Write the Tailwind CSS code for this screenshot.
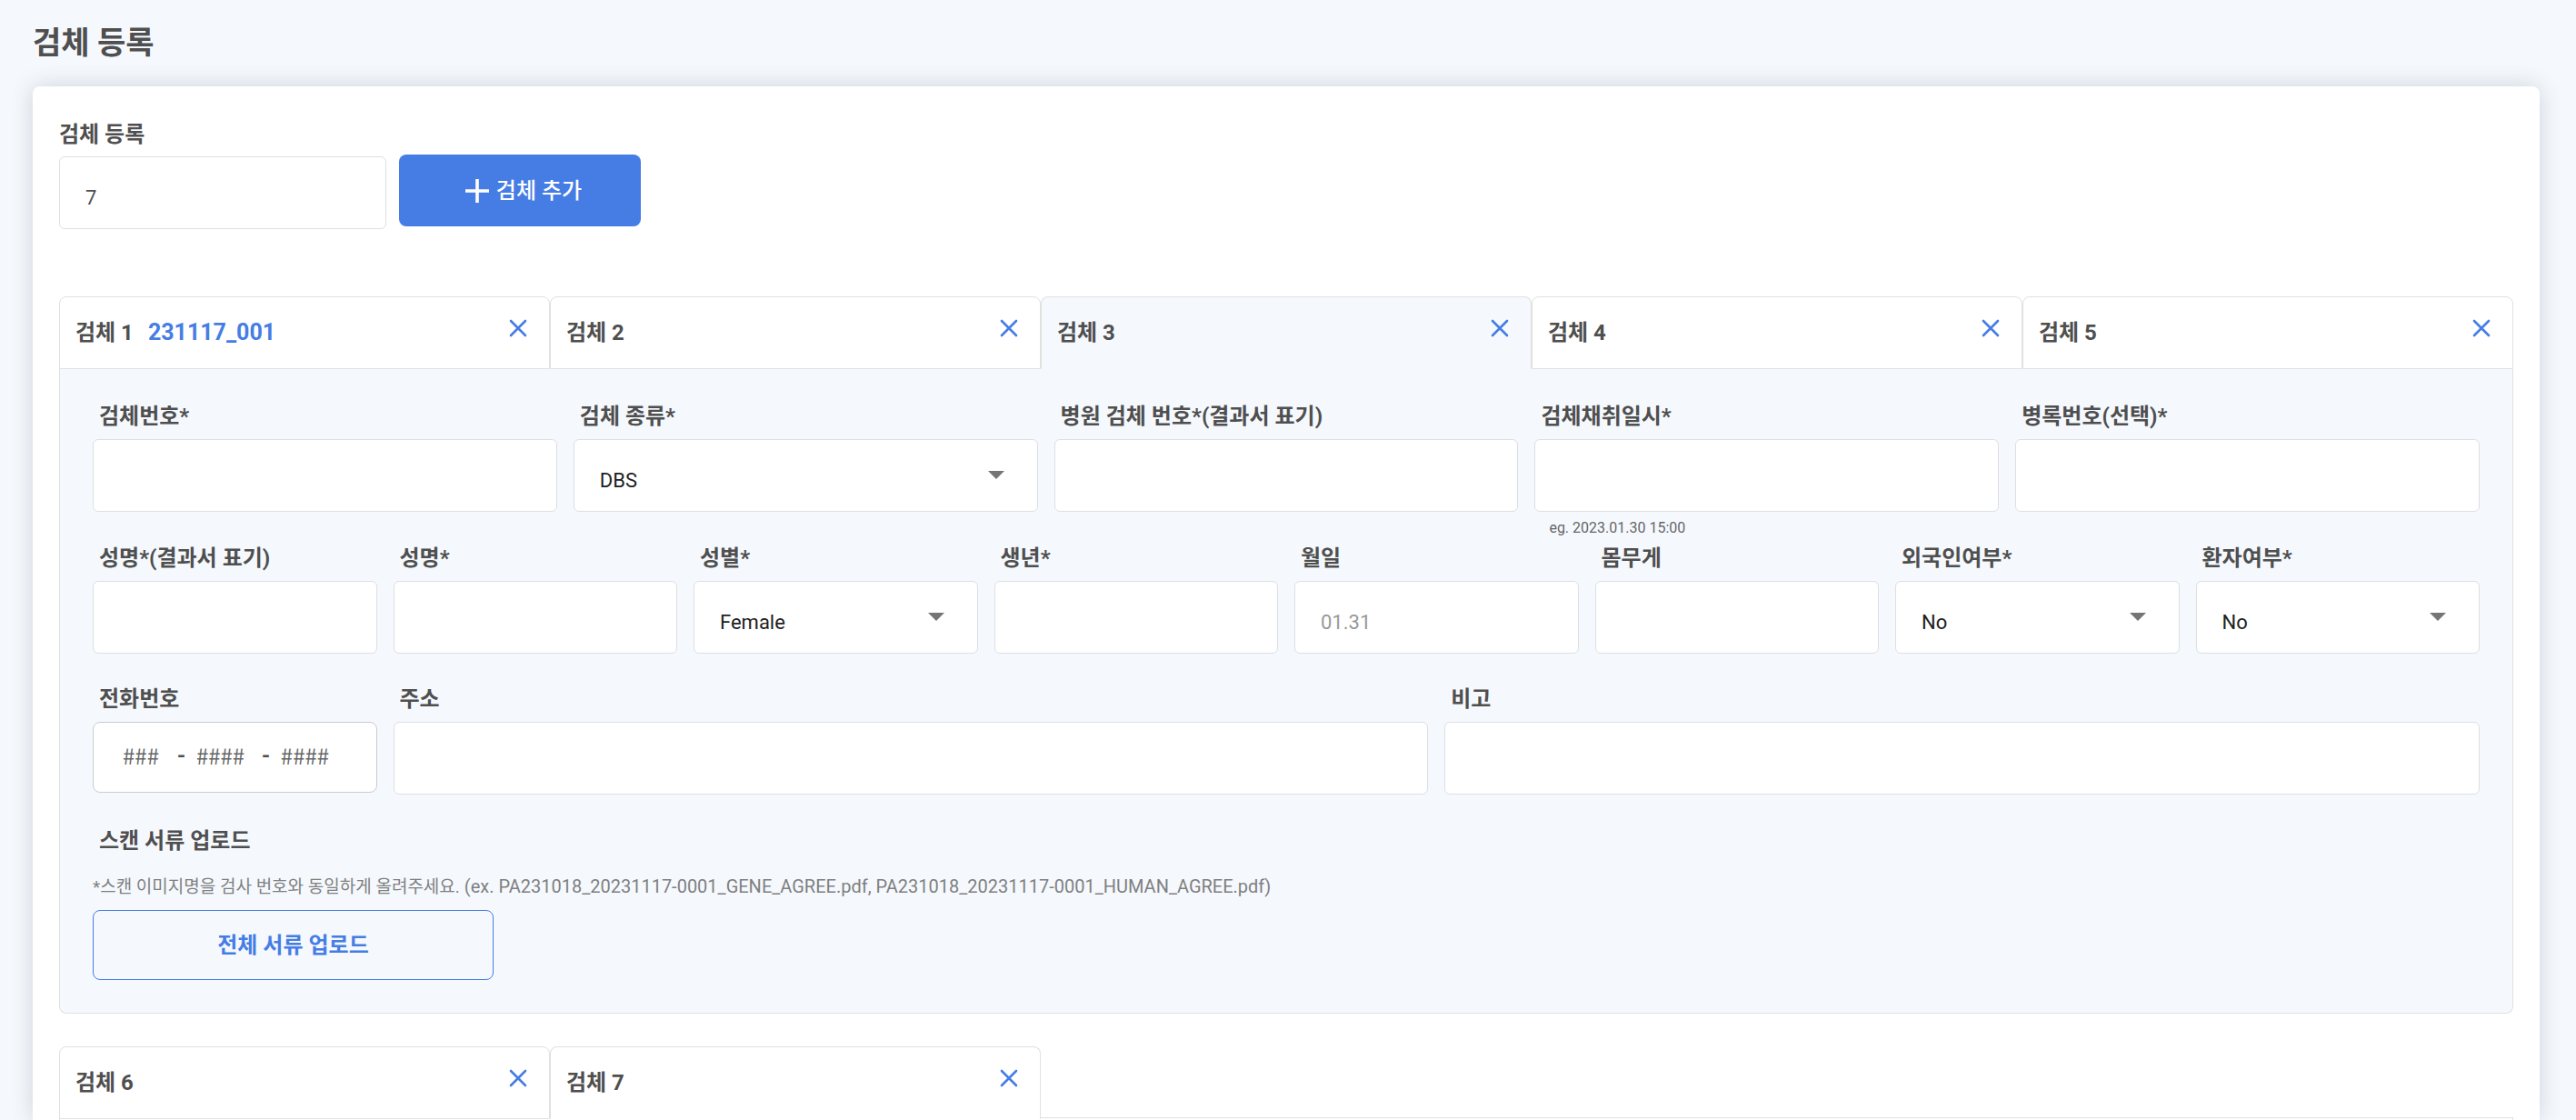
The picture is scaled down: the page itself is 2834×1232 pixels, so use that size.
<!DOCTYPE html>
<html lang="ko">
<head>
<meta charset="utf-8">
<meta name="viewport" content="width=device-width, initial-scale=1">
<title>검체 등록</title>
<script src="https://cdn.jsdelivr.net/npm/@tailwindcss/browser@4"></script>
</head>
<body class="bg-[#f5f9fe] font-['Roboto','Noto_Sans_CJK_KR',sans-serif] text-2xl text-[#4f4f4f]">
<svg class="hidden" aria-hidden="true">
  <symbol id="close" viewBox="0 0 20 20"><path d="M2 2 18 18M18 2 2 18" fill="none" stroke="currentColor" stroke-width="2.6" stroke-linecap="round"/></symbol>
  <symbol id="caret" viewBox="0 0 18 9"><path d="M0 0H18L9 9Z" fill="currentColor"/></symbol>
</svg>
<div class="flex min-h-screen flex-col pt-5 pr-10 pl-9">
  <h1 class="h-[75px] text-[34px] leading-[54px] font-bold">검체 등록</h1>
  <main class="flex flex-1 flex-col rounded-t-lg bg-white pt-9 pr-[29px] pl-[29px] shadow-[0_0_24px_rgba(50,60,70,0.2)]">
    <form class="flex items-start gap-[14px]">
      <div class="flex w-[360px] flex-col gap-1">
        <label for="count" class="h-[37px] leading-[34px] font-bold">검체 등록</label>
        <input id="count" type="text" value="7" class="h-20 w-full rounded-md border border-[#e0e0e0] bg-white px-7 pt-2.5 text-[22px]">
      </div>
      <button type="button" class="mt-[39px] flex h-[79px] w-[266px] items-center justify-center gap-2 rounded-lg bg-[#467de4] pl-2 font-medium text-white">
        <svg class="size-[26px]" viewBox="0 0 26 26" aria-hidden="true"><path d="M13 0V26M0 13H26" fill="none" stroke="currentColor" stroke-width="3.6"/></svg>
        검체 추가
      </button>
    </form>

    <div class="mt-[74px] grid grid-cols-5 font-bold">
      <div class="flex h-20 items-center rounded-t-lg border border-[#e0e0e0] bg-white pr-6 pl-[17px]"><span>검체 1</span><span class="ml-4 text-[25px] text-[#467de4]">231117_001</span><button type="button" aria-label="검체 1 삭제" class="mb-2.5 ml-auto text-[#467de4]"><svg class="size-5"><use href="#close"/></svg></button></div>
      <div class="flex h-20 items-center rounded-t-lg border border-[#e0e0e0] bg-white pr-6 pl-[17px]"><span>검체 2</span><button type="button" aria-label="검체 2 삭제" class="mb-2.5 ml-auto text-[#467de4]"><svg class="size-5"><use href="#close"/></svg></button></div>
      <div class="flex h-20 items-center rounded-t-lg border border-[#e0e0e0] border-b-[#f5f9fe] bg-[#f5f9fe] pr-6 pl-[17px]"><span>검체 3</span><button type="button" aria-label="검체 3 삭제" class="mb-2.5 ml-auto text-[#467de4]"><svg class="size-5"><use href="#close"/></svg></button></div>
      <div class="flex h-20 items-center rounded-t-lg border border-[#e0e0e0] bg-white pr-6 pl-[17px]"><span>검체 4</span><button type="button" aria-label="검체 4 삭제" class="mb-2.5 ml-auto text-[#467de4]"><svg class="size-5"><use href="#close"/></svg></button></div>
      <div class="flex h-20 items-center rounded-t-lg border border-[#e0e0e0] bg-white pr-6 pl-[17px]"><span>검체 5</span><button type="button" aria-label="검체 5 삭제" class="mb-2.5 ml-auto text-[#467de4]"><svg class="size-5"><use href="#close"/></svg></button></div>
    </div>

    <form class="rounded-b-lg border border-t-0 border-[#e0e0e0] bg-[#f5f9fe] px-9 pt-8 pb-9">
      <div class="grid grid-cols-5 gap-[18px]">
        <div class="h-[138px]"><label for="no" class="block h-[45px] pl-[7px] leading-[40px] font-bold">검체번호*</label><input id="no" class="h-20 w-full rounded-md border border-[#dcdfe3] bg-white px-7 pt-2.5 text-[22px]"></div>
        <div class="h-[138px]"><label for="kind" class="block h-[45px] pl-[7px] leading-[40px] font-bold">검체 종류*</label>
          <div class="relative"><select id="kind" class="h-20 w-full appearance-none rounded-md border border-[#dcdfe3] bg-white px-7 pt-3 text-[22px] text-[#212121]"><option>DBS</option></select><svg class="pointer-events-none absolute top-[35px] right-[37px] h-[9px] w-[18px] text-[#757575]"><use href="#caret"/></svg></div></div>
        <div class="h-[138px]"><label for="hospital" class="block h-[45px] pl-[7px] leading-[40px] font-bold">병원 검체 번호*(결과서 표기)</label><input id="hospital" class="h-20 w-full rounded-md border border-[#dcdfe3] bg-white px-7 pt-2.5 text-[22px]"></div>
        <div class="h-[138px]"><label for="taken" class="block h-[45px] pl-[7px] leading-[40px] font-bold">검체채취일시*</label><input id="taken" aria-describedby="taken-hint" class="block h-20 w-full rounded-md border border-[#dcdfe3] bg-white px-7 pt-2.5 text-[22px]"><p id="taken-hint" class="pt-1.5 pl-4 text-base leading-6 text-[#666]">eg. 2023.01.30 15:00</p></div>
        <div class="h-[138px]"><label for="chart" class="block h-[45px] pl-[7px] leading-[40px] font-bold">병록번호(선택)*</label><input id="chart" class="h-20 w-full rounded-md border border-[#dcdfe3] bg-white px-7 pt-2.5 text-[22px]"></div>
      </div>

      <div class="mt-[18px] grid grid-cols-8 gap-[18px]">
        <div class="h-[138px]"><label for="name1" class="block h-[45px] pl-[7px] leading-[40px] font-bold">성명*(결과서 표기)</label><input id="name1" class="h-20 w-full rounded-md border border-[#dcdfe3] bg-white px-7 pt-2.5 text-[22px]"></div>
        <div class="h-[138px]"><label for="name2" class="block h-[45px] pl-[7px] leading-[40px] font-bold">성명*</label><input id="name2" class="h-20 w-full rounded-md border border-[#dcdfe3] bg-white px-7 pt-2.5 text-[22px]"></div>
        <div class="h-[138px]"><label for="sex" class="block h-[45px] pl-[7px] leading-[40px] font-bold">성별*</label>
          <div class="relative"><select id="sex" class="h-20 w-full appearance-none rounded-md border border-[#dcdfe3] bg-white px-7 pt-3 text-[22px] text-[#212121]"><option>Female</option><option>Male</option></select><svg class="pointer-events-none absolute top-[35px] right-[37px] h-[9px] w-[18px] text-[#757575]"><use href="#caret"/></svg></div></div>
        <div class="h-[138px]"><label for="year" class="block h-[45px] pl-[7px] leading-[40px] font-bold">생년*</label><input id="year" class="h-20 w-full rounded-md border border-[#dcdfe3] bg-white px-7 pt-2.5 text-[22px]"></div>
        <div class="h-[138px]"><label for="day" class="block h-[45px] pl-[7px] leading-[40px] font-bold">월일</label><input id="day" placeholder="01.31" class="h-20 w-full rounded-md border border-[#dcdfe3] bg-white px-7 pt-2.5 text-[22px] placeholder:text-[#999]"></div>
        <div class="h-[138px]"><label for="weight" class="block h-[45px] pl-[7px] leading-[40px] font-bold">몸무게</label><input id="weight" class="h-20 w-full rounded-md border border-[#dcdfe3] bg-white px-7 pt-2.5 text-[22px]"></div>
        <div class="h-[138px]"><label for="foreign" class="block h-[45px] pl-[7px] leading-[40px] font-bold">외국인여부*</label>
          <div class="relative"><select id="foreign" class="h-20 w-full appearance-none rounded-md border border-[#dcdfe3] bg-white px-7 pt-3 text-[22px] text-[#212121]"><option>No</option><option>Yes</option></select><svg class="pointer-events-none absolute top-[35px] right-[37px] h-[9px] w-[18px] text-[#757575]"><use href="#caret"/></svg></div></div>
        <div class="h-[138px]"><label for="patient" class="block h-[45px] pl-[7px] leading-[40px] font-bold">환자여부*</label>
          <div class="relative"><select id="patient" class="h-20 w-full appearance-none rounded-md border border-[#dcdfe3] bg-white px-7 pt-3 text-[22px] text-[#212121]"><option>No</option><option>Yes</option></select><svg class="pointer-events-none absolute top-[35px] right-[37px] h-[9px] w-[18px] text-[#757575]"><use href="#caret"/></svg></div></div>
      </div>

      <div class="mt-[17px] grid grid-cols-16 gap-[18px]">
        <div class="col-span-2 h-[138px]"><label for="phone1" class="block h-[45px] pl-[7px] leading-[40px] font-bold">전화번호</label>
          <div class="flex h-[78px] items-center rounded-lg border border-[#c9cbcf] bg-white pb-1 pl-8 font-['Noto_Sans_CJK_KR',sans-serif]">
            <input id="phone1" placeholder="###" class="w-[60px] placeholder:text-[#666]"><span class="font-bold">-</span>
            <input aria-label="전화번호 가운데 자리" placeholder="####" class="ml-3 w-[72px] placeholder:text-[#666]"><span class="font-bold">-</span>
            <input aria-label="전화번호 끝 자리" placeholder="####" class="ml-3 w-[72px] placeholder:text-[#666]">
          </div></div>
        <div class="col-span-7 h-[138px]"><label for="address" class="block h-[45px] pl-[7px] leading-[40px] font-bold">주소</label><input id="address" class="h-20 w-full rounded-md border border-[#dcdfe3] bg-white px-7 pt-2.5 text-[22px]"></div>
        <div class="col-span-7 h-[138px]"><label for="note" class="block h-[45px] pl-[7px] leading-[40px] font-bold">비고</label><input id="note" class="h-20 w-full rounded-md border border-[#dcdfe3] bg-white px-7 pt-2.5 text-[22px]"></div>
      </div>

      <h2 class="mt-[18px] pl-[7px] leading-[40px] font-bold">스캔 서류 업로드</h2>
      <p class="mt-2.5 h-[42px] text-xl leading-10 text-[#808080]"><span class="text-[19px]">*스캔 이미지명을 검사 번호와 동일하게 올려주세요.</span> (ex. PA231018_20231117-0001_GENE_AGREE.pdf, PA231018_20231117-0001_HUMAN_AGREE.pdf)</p>
      <button type="button" class="mt-1 block h-[77px] w-[441px] rounded-lg border border-[#467de4] font-bold text-[#467de4]">전체 서류 업로드</button>
    </form>

    <div class="relative mt-9 grid grid-cols-5 font-bold">
      <div class="flex h-20 items-center rounded-t-lg border border-[#e0e0e0] bg-white pr-6 pl-[17px]"><span>검체 6</span><button type="button" aria-label="검체 6 삭제" class="mb-2.5 ml-auto text-[#467de4]"><svg class="size-5"><use href="#close"/></svg></button></div>
      <div class="flex h-20 items-center rounded-t-lg border border-[#e0e0e0] border-b-white bg-white pr-6 pl-[17px]"><span>검체 7</span><button type="button" aria-label="검체 7 삭제" class="mb-2.5 ml-auto text-[#467de4]"><svg class="size-5"><use href="#close"/></svg></button></div>
    </div>
    <div class="-mt-0.5 flex-1 border border-b-0 border-[#e0e0e0] bg-white"></div>
  </main>
</div>
</body>
</html>
